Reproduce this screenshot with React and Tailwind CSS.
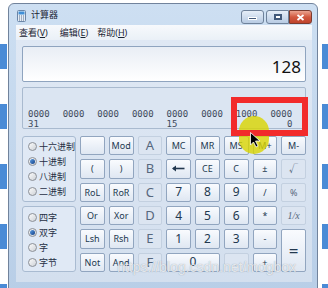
const rows = [
  [["", "fn"], ["Mod", "fn"], ["A", "hex", true], ["MC", "fn"], ["MR", "fn"], ["MS", "fn"], ["M+", "fn"], ["M-", "fn"]],
  [["(", "fn"], [")", "fn"], ["B", "hex", true], ["back", "arrow"], ["CE", "fn"], ["C", "fn"], ["±", "fn"], ["√", "fn", true]],
  [["RoL", "fn"], ["RoR", "fn"], ["C", "hex", true], ["7", "num"], ["8", "num"], ["9", "num"], ["/", "fn"], ["%", "fn", true]],
  [["Or", "fn"], ["Xor", "fn"], ["D", "hex", true], ["4", "num"], ["5", "num"], ["6", "num"], ["*", "fn"], ["1/x", "inv", true]],
  [["Lsh", "fn"], ["Rsh", "fn"], ["E", "hex", true], ["1", "num"], ["2", "num"], ["3", "num"], ["-", "fn"], ["=", "eq"]],
  [["Not", "fn"], ["And", "fn"], ["F", "hex", true], ["0", "zero"], [".", "fn", true], ["+", "fn"]],
];

const sizes = {
  fn: "text-[9px]",
  num: "text-[12px]",
  zero: "text-[12px] col-span-2",
  hex: "text-[13px]",
  eq: "text-[17px] row-span-2",
  inv: "text-[10px] italic font-['Liberation_Serif',serif]",
  arrow: "",
};

const Key = ({ label, kind, off }) => (
  <div
    className={`flex items-center justify-center rounded-[2px] border leading-none ${sizes[kind]} ${
      off
        ? "border-[#c3d0e0] bg-[#dce5f1] text-[#56677d]"
        : "border-[#91a5bf] bg-gradient-to-b from-[#f9fbfe] to-[#dfe7f2] text-[#22384f]"
    }`}
  >
    {kind === "arrow" ? (
      <svg width="13" height="7" viewBox="0 0 13 7">
        <path d="M1 3.5H12.5" stroke="#22384f" strokeWidth="1.6" />
        <path d="M0 3.5L4 0.5V6.5Z" fill="#22384f" />
      </svg>
    ) : (
      label
    )}
  </div>
);

const Radio = ({ label, on }) => (
  <div className="flex h-[15px] items-center gap-[2px] text-[9px] text-[#1f2f44]">
    <span className="flex h-[9px] w-[9px] items-center justify-center rounded-full border border-[#8c9097] bg-gradient-to-br from-[#fbfbfb] to-[#cfd3d8]">
      {on && <span className="h-[5px] w-[5px] rounded-full bg-gradient-to-br from-[#5fa0e6] to-[#123f86]" />}
    </span>
    {label}
  </div>
);

const Stripe = ({ right }) => (
  <div className={`flex shrink-0 flex-col ${right ? "w-[10px]" : "w-[8px]"}`}>
    <div className={`mt-[16px] h-[1px] bg-[#23877d] ${right ? "ml-[2px]" : "w-[8px]"}`} />
    <div className={`mt-[28px] flex flex-col gap-[35px] ${right ? "items-end" : ""}`}>
      {[0, 1, 2, 3, 4].map((i) => (
        <div key={i} className={`h-[25px] bg-[#4a8bd6] ${right ? "w-[6px]" : "w-[7px]"}`} />
      ))}
    </div>
  </div>
);

const bits = ["0000", "0000", "0000", "0000", "0000", "0000", "1000", "0000"];
const marks = { 0: "31", 4: "15", 7: "0" };

export default function App() {
  return (
    <div className="relative flex h-[288px] w-[328px] overflow-hidden bg-white font-['Noto_Sans','Noto_Sans_CJK_SC',sans-serif]">
      <Stripe />
      <div className="mt-[3px] flex h-[292px] w-[310px] shrink-0 flex-col rounded-t-[6px] border border-[#71839c] bg-gradient-to-b from-[#cddff2] to-[#b8cee7]">
        {/* title bar */}
        <div className="flex h-[21px] items-start">
          <svg className="ml-[8px] mt-[6px]" width="9" height="12" viewBox="0 0 9 12">
            <rect x="0.5" y="0.5" width="8" height="11" rx="1" fill="#e4ecf5" stroke="#6b86a8" />
            <rect x="1.5" y="1.5" width="6" height="3" fill="#3f8fd8" />
            <path d="M2 6h1M4 6h1M6 6h1M2 8h1M4 8h1M6 8h1M2 10h1M4 10h1M6 10h1" stroke="#5a6f8c" />
          </svg>
          <span className="ml-[5px] mt-[5px] text-[9px] leading-[12px] text-[#1a2433]">计算器</span>
          <div className="ml-auto mr-[5px] mt-[6px] flex">
            <div className="flex h-[14px] w-[23px] items-center justify-center rounded-[3px] border border-[#6e819a] bg-gradient-to-b from-[#e6eef8] to-[#b8cbe3]">
              <span className="mt-[3px] h-[3px] w-[9px] border border-white bg-[#42597a]" />
            </div>
            <div className="ml-[2px] flex h-[14px] w-[23px] items-center justify-center rounded-l-[3px] border border-[#6e819a] bg-gradient-to-b from-[#e6eef8] to-[#b8cbe3]">
              <span className="h-[6px] w-[8px] border-[2px] border-[#42597a] bg-white" />
            </div>
            <div className="flex h-[14px] w-[23px] items-center justify-center rounded-r-[3px] border border-[#7b3b2e] bg-gradient-to-b from-[#eaa38f] via-[#d25a40] to-[#c0432c]">
              <svg width="9" height="7" viewBox="0 0 9 7">
                <path d="M1.5 1L7.5 6M7.5 1L1.5 6" stroke="#fff" strokeWidth="1.8" />
              </svg>
            </div>
          </div>
        </div>

        {/* menu */}
        <div className="ml-[7px] flex h-[15px] w-[296px] items-center bg-gradient-to-b from-[#f7f9fc] to-[#eaf0f7] pl-[3px] text-[9px] text-[#1a2433]">
          <span>查看(<u>V</u>)</span>
          <span className="ml-[12px]">编辑(<u>E</u>)</span>
          <span className="ml-[9px]">帮助(<u>H</u>)</span>
        </div>

        {/* client */}
        <div className="ml-[7px] flex h-[242px] w-[296px] flex-col bg-gradient-to-b from-[#dfe8f4] to-[#d3dfee] px-[6px] pt-[6px]">
          <div className="flex h-[36px] items-end justify-end rounded-[2px] border border-[#8fa4bf] bg-gradient-to-b from-[#e9eef5] to-white pb-[4px] pr-[4px] text-[17px] leading-[20px] text-[#111]">
            128
          </div>

          <div className="mt-[5px] flex h-[42px] rounded-[2px] border border-[#a9bacf] bg-[#dbe5f2] pl-[5px] pt-[21px] font-['DejaVu_Sans_Mono',monospace] text-[9px] leading-[10px] text-[#3e4a5b]">
            {bits.map((b, i) => (
              <div key={i} className="w-[35.5px]">
                <div className="w-[22px]">
                  <div>{b}</div>
                  <div className={i === 7 ? "text-right" : ""}>{marks[i] || "\u00a0"}</div>
                </div>
              </div>
            ))}
          </div>

          <div className="mt-[7px] flex gap-[4px]">
            <div className="flex w-[54px] flex-col gap-[4px]">
              <div className="h-[66px] rounded-[3px] border border-[#a9bbd1] bg-[#e0e9f5] pl-[5px] pt-[2px]">
                <Radio label="十六进制" />
                <Radio label="十进制" on />
                <Radio label="八进制" />
                <Radio label="二进制" />
              </div>
              <div className="h-[66px] rounded-[3px] border border-[#a9bbd1] bg-[#e0e9f5] pl-[5px] pt-[3px]">
                <Radio label="四字" />
                <Radio label="双字" on />
                <Radio label="字" />
                <Radio label="字节" />
              </div>
            </div>
            <div className="grid h-[136px] w-[226px] grid-cols-8 grid-rows-6 gap-[4px]">
              {rows.flat().map(([label, kind, off], i) => (
                <Key key={i} label={label} kind={kind} off={off} />
              ))}
            </div>
          </div>
        </div>
      </div>
      <Stripe right />

      {/* annotations over the screenshot */}
      <div className="absolute left-[239px] top-[116px] h-[38px] w-[30px] rounded-full bg-[#d9d500]/80" />
      <div className="absolute left-[231px] top-[97px] h-[39px] w-[77px] border-[6px] border-[#f22b2b]" />
      <svg className="absolute left-[250px] top-[132px]" width="11" height="16" viewBox="0 0 11 16">
        <path d="M0.5 0.5V13L3.5 10L6 15L8 14L5.5 9H10Z" fill="#000" stroke="#fff" strokeWidth="0.8" />
      </svg>
      <div className="absolute left-[117px] top-[258px] font-['Liberation_Sans',sans-serif] text-[14px] leading-[18px] text-white/75 [text-shadow:0_0_1px_rgba(80,100,120,0.6)]">
        https://blog.csdn.net/mogbox
      </div>
    </div>
  );
}
